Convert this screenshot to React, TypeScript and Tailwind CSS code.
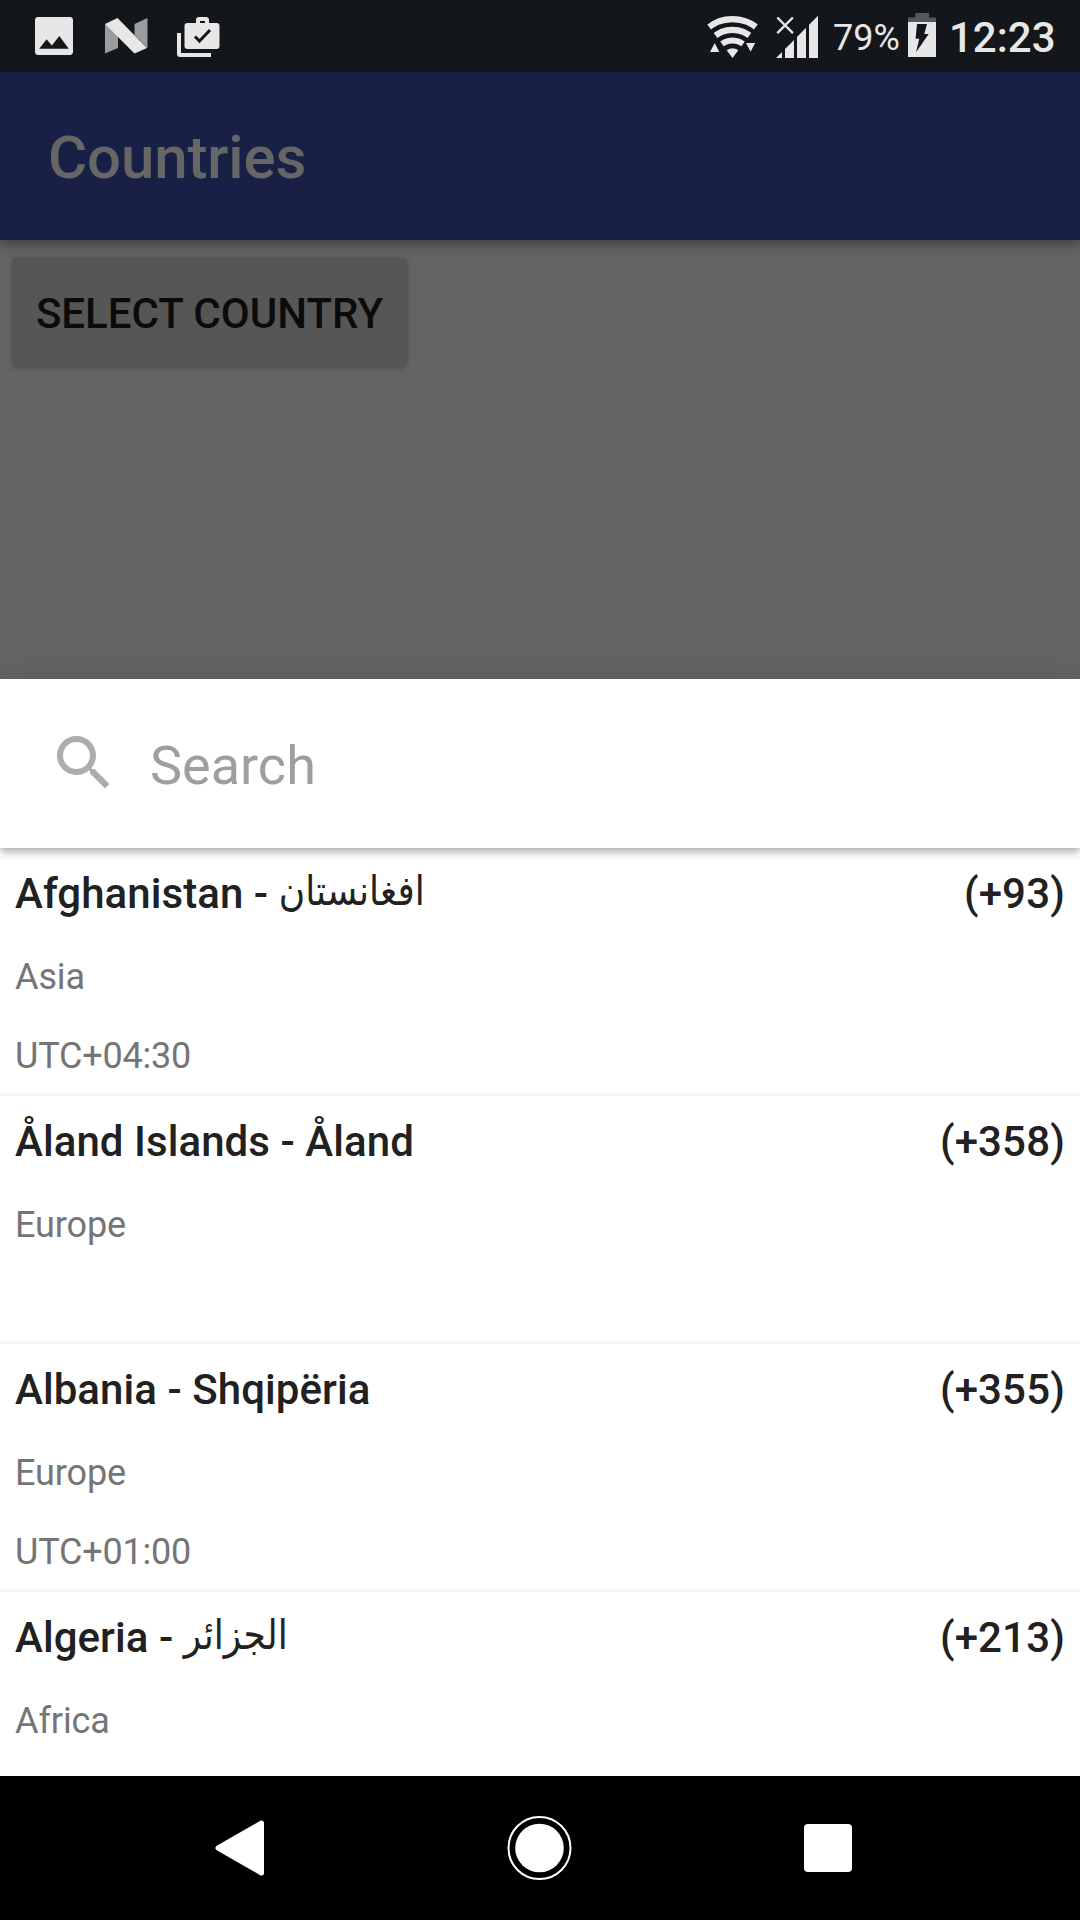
import React from "react";

type Country = {
  name: string;
  native: string;
  arabic?: boolean;
  code: string;
  region: string;
  zone?: string;
};

const countries: Country[] = [
  { name: "Afghanistan", native: "افغانستان", arabic: true, code: "(+93)", region: "Asia", zone: "UTC+04:30" },
  { name: "Åland Islands", native: "Åland", code: "(+358)", region: "Europe" },
  { name: "Albania", native: "Shqipëria", code: "(+355)", region: "Europe", zone: "UTC+01:00" },
  { name: "Algeria", native: "الجزائر", arabic: true, code: "(+213)", region: "Africa" },
];

function NotificationIcons() {
  return (
    <svg className="h-[72px] w-[240px] shrink-0" viewBox="0 0 240 72" fill="#e7e7e7">
      <path
        transform="translate(28.67 10.67) scale(2.111)"
        d="M21 19.6V4.4c0-.8-.6-1.4-1.4-1.4H4.4C3.6 3 3 3.6 3 4.4v15.2c0 .8.6 1.4 1.4 1.4h15.2c.8 0 1.4-.6 1.4-1.4zM8.5 13.5l2.5 3.01L14.5 12l4.5 6H5l3.5-4.5z"
      />
      <path fill="#9b9c9d" d="M105 24l13 12v12l-13 5.5zM134.500 24l13-6v30l-13-13z" />
      <path d="M105 24l12.500-6L147 48l-12.500 5.500z" />
      <path
        fillRule="evenodd"
        d="M187.500 23H196v-3a3 3 0 0 1 3-3h7a3 3 0 0 1 3 3v3h7.500a3 3 0 0 1 3 3v20a3 3 0 0 1-3 3h-29a3 3 0 0 1-3-3V26a3 3 0 0 1 3-3zM200 21v2h5v-2z"
      />
      <path d="M177 33h4v20h30v4h-31a3 3 0 0 1-3-3z" />
      <path d="M195 36.500l4.500 4.500 10.500-11" fill="none" stroke="#13171b" strokeWidth="3" />
    </svg>
  );
}

function WifiIcon() {
  return (
    <svg className="h-[72px] w-[52px] shrink-0" viewBox="706 0 52 72" fill="#e7e7e7">
      <clipPath id="wifi-fan">
        <path d="M732.500 58l-36-48h72z" />
      </clipPath>
      <g clipPath="url(#wifi-fan)">
        <g fill="none" stroke="#e7e7e7" strokeWidth="6.200">
          <circle cx="732.500" cy="58" r="38.900" />
          <circle cx="732.500" cy="58" r="28.200" />
          <circle cx="732.500" cy="58" r="17.500" />
        </g>
        <circle cx="732.500" cy="58" r="9.800" />
      </g>
      <path d="M710 52l4.700-9 4.600 9zM746 43h9.200l-4.600 8.800z" />
    </svg>
  );
}

function SignalIcon() {
  return (
    <svg className="ml-[17px] h-[72px] w-[44px] shrink-0" viewBox="775 0 44 72" fill="#e7e7e7">
      <path d="M776 58l6-6v6zM785 49l9-9v18h-9zM797 37l9-9.200V58h-9zM809 24.800l9-9.100V58h-9z" />
      <path d="M777.300 17.500l15.600 15.700M792.900 17.500l-15.600 15.700" stroke="#e7e7e7" strokeWidth="2.400" />
    </svg>
  );
}

function BatteryIcon() {
  return (
    <svg className="h-[72px] w-[28px] shrink-0" viewBox="908 0 28 72">
      <path fill="#55585b" d="M915.300 13h13.700v4.500h7V22h-28v-4.500h7.300z" />
      <path fill="#e7e7e7" d="M908 22h28v35h-28z" />
      <path fill="#13171b" d="M917 24h10l-2.700 10h4.400L916 52.300l3.300-13.600h-3.700z" />
    </svg>
  );
}

function StatusBar() {
  return (
    <div className="flex h-[72px] shrink-0 items-center bg-[#13171b] text-[#e7e7e7]">
      <NotificationIcons />
      <div className="ml-auto flex h-full items-center">
        <WifiIcon />
        <SignalIcon />
        <span className="ml-[14px] w-[75px] pt-1 text-[36px] leading-[72px]">79%</span>
        <BatteryIcon />
        <span className="ml-[13px] w-[131px] pt-1 text-[42px] font-medium leading-[72px]">12:23</span>
      </div>
    </div>
  );
}

function CountryRow({ country }: { country: Country }) {
  return (
    <li className="h-[248px] shrink-0 border-b-[3px] border-[#f5f5f5] px-[15px] pt-4">
      <div className="flex justify-between text-[42px] font-medium leading-[60px] text-[#212121]">
        <div className="flex tracking-[0.06px]">
          <span className="whitespace-pre">{country.name} - </span>
          {country.arabic ? (
            <span
              dir="rtl"
              className="-mt-[3px] h-[60px] scale-y-[1.15] font-['DejaVu_Sans',sans-serif] text-[36px] font-normal tracking-normal"
            >
              {country.native}
            </span>
          ) : (
            <span>{country.native}</span>
          )}
        </div>
        <span className="tracking-[0.15px]">{country.code}</span>
      </div>
      <p className="mt-[23px] text-[36px] leading-[60px] tracking-[-0.1px] text-[#757575]">{country.region}</p>
      {country.zone && (
        <p className="mt-[19px] text-[36px] leading-[60px] tracking-[-0.2px] text-[#757575]">{country.zone}</p>
      )}
    </li>
  );
}

function NavigationBar() {
  return (
    <div className="flex h-[144px] shrink-0 bg-black">
      <svg className="h-[144px] w-[1080px]" viewBox="0 0 1080 144" fill="#fff">
        <path
          d="M218 72L261.500 47V97z"
          stroke="#fff"
          strokeWidth="5"
          strokeLinejoin="round"
        />
        <circle cx="539.500" cy="72" r="24.300" />
        <circle cx="539.500" cy="72" r="31" fill="none" stroke="#fff" strokeWidth="2" />
        <rect x="804" y="48" width="48" height="48" rx="4" />
      </svg>
    </div>
  );
}

export default function App() {
  return (
    <div className="flex h-[1920px] w-[1080px] flex-col overflow-hidden bg-[#646464] font-[Roboto,sans-serif]">
      <StatusBar />
      <header className="flex h-[168px] shrink-0 items-center bg-[#192046] px-12 shadow-[0_4px_12px_rgba(0,0,0,0.4)]">
        <h1 className="pt-[4px] text-[60px] font-medium leading-[70px] tracking-[-0.15px] text-[#666666]">Countries</h1>
      </header>
      <main className="h-[439px] shrink-0 px-3 pt-[17px]">
        <button className="flex h-[109px] w-[395px] items-center justify-center rounded-[6px] bg-[#565656] pt-[5px] text-[42px] font-medium leading-[50px] text-[#0b0b0b] shadow-[0_2px_5px_rgba(0,0,0,0.25)]">
          SELECT COUNTRY
        </button>
      </main>
      <section className="flex h-[1097px] shrink-0 flex-col overflow-hidden bg-white shadow-[0_0_30px_rgba(0,0,0,0.12)]">
        <div className="z-10 flex h-[169px] shrink-0 items-center bg-white pl-12 shadow-[0_4px_8px_rgba(0,0,0,0.32)]">
          <svg className="mt-[-1px] size-[72px]" viewBox="0 0 24 24" fill="#adadad">
            <path d="M15.500 14h-.79l-.28-.27A6.471 6.471 0 0 0 16 9.500 6.500 6.500 0 1 0 9.500 16c1.610 0 3.090-.59 4.230-1.570l.27.28v.79l5 4.990L20.490 19l-4.990-5zm-6 0C7.010 14 5 11.990 5 9.500S7.010 5 9.500 5 14 7.010 14 9.500 11.990 14 9.500 14z" />
          </svg>
          <span className="ml-[30px] pt-[5px] text-[54px] leading-[64px] text-[#9e9e9e]">Search</span>
        </div>
        <ul className="flex min-h-0 flex-1 flex-col overflow-hidden">
          {countries.map((country) => (
            <CountryRow key={country.name} country={country} />
          ))}
        </ul>
      </section>
      <NavigationBar />
    </div>
  );
}
